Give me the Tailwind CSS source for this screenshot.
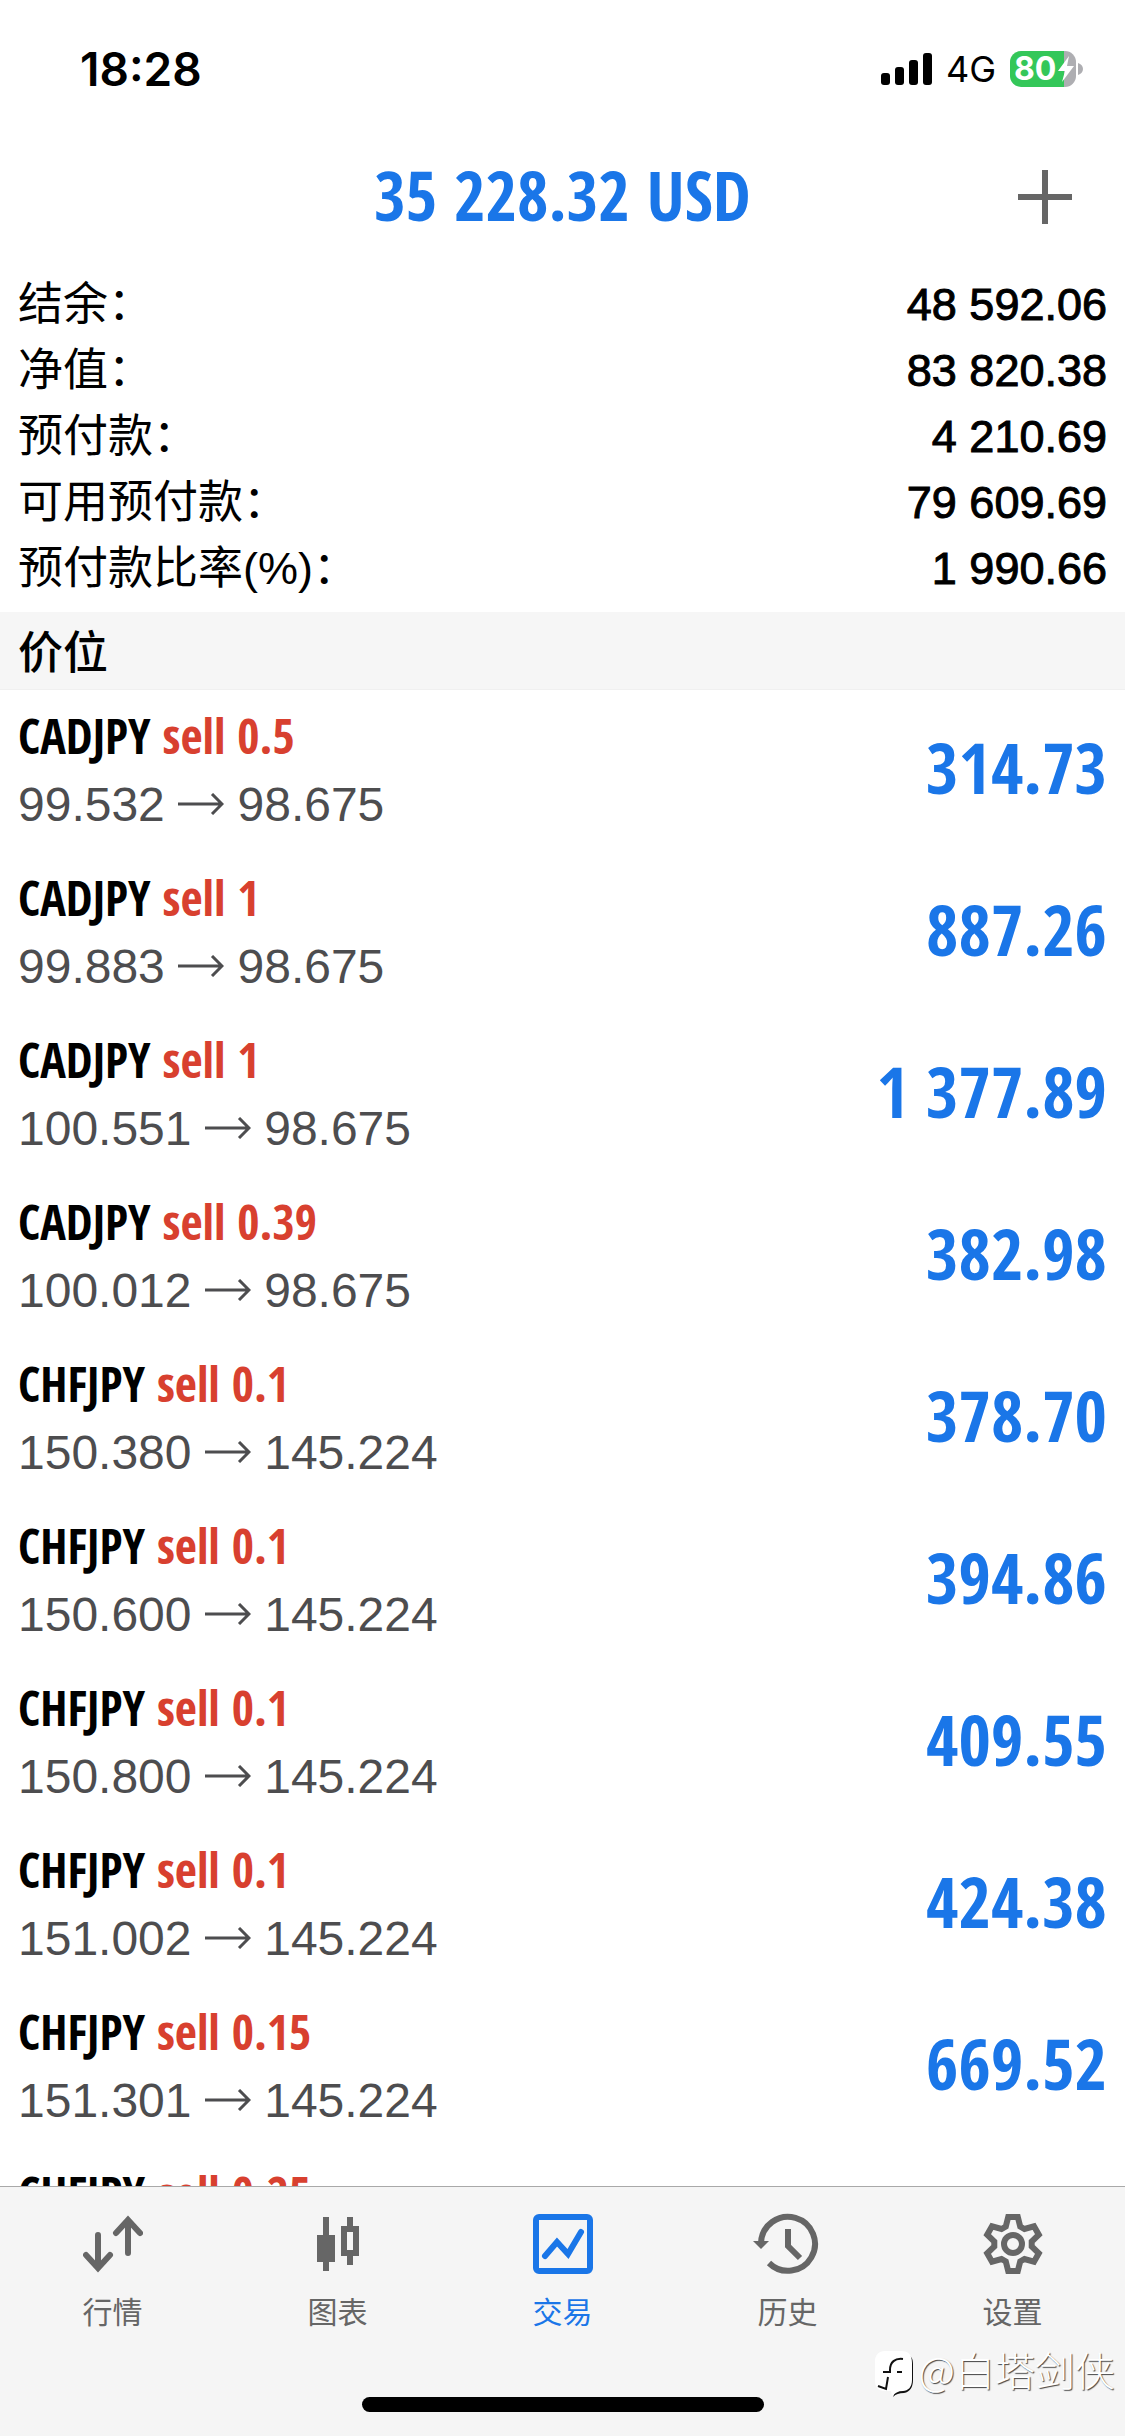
<!DOCTYPE html>
<html lang="zh-CN">
<head>
<meta charset="utf-8">
<meta name="viewport" content="width=device-width, initial-scale=1">
<title>交易</title>
<script src="https://cdn.jsdelivr.net/npm/@tailwindcss/browser@4"></script>
</head>
<body class="bg-white text-black font-['Liberation_Sans','Noto_Sans_CJK_SC',sans-serif]">
<div class="flex h-screen flex-col overflow-hidden">

  <header class="shrink-0">
    <div class="flex h-[138px] items-center justify-between pl-20 pr-[42px] font-[Inter,sans-serif]">
      <time class="text-[46px] leading-none font-semibold">18:28</time>
      <div class="flex items-center">
        <svg class="mr-[14px] h-8 w-[51px]" viewBox="0 0 51 32" aria-hidden="true">
          <rect x="0" y="20" width="9" height="12" rx="3"/><rect x="14" y="14" width="9" height="18" rx="3"/><rect x="28" y="7" width="9" height="25" rx="3"/><rect x="42" y="0" width="9" height="32" rx="3"/>
        </svg>
        <span class="mr-[14px] text-[36px] leading-none">4G</span>
        <div class="flex h-9 w-[66px] items-center rounded-[11px] bg-[linear-gradient(to_right,#34c759_82%,#aeaeb2_82%)] pl-1">
          <span class="text-[32px] leading-9 font-bold text-white">80</span>
          <svg class="ml-[2px] h-[26px] w-4 shrink-0" viewBox="0 0 16 26" fill="#fff" aria-hidden="true"><path d="M11 0 0 15h7L4 26 16 10H9z"/></svg>
        </div>
        <svg class="ml-[2px] h-3 w-[5px]" viewBox="0 0 5 12" fill="#aeaeb2" aria-hidden="true"><path d="M0 0c3 1 5 3 5 6s-2 5-5 6z"/></svg>
      </div>
    </div>
    <div class="grid h-[118px] grid-cols-[1fr_auto_1fr] items-center px-[53px]">
      <h1 class="col-start-2 pb-1 font-['Open_Sans_Condensed',sans-serif] text-[68px] leading-none font-bold text-[#1a76e8]">35 228.32 USD</h1>
      <button type="button" aria-label="新订单" class="justify-self-end">
        <svg class="h-[54px] w-[54px]" viewBox="0 0 54 54" fill="none" stroke="#666" stroke-width="6" aria-hidden="true"><path d="M27 0v54M0 27h54"/></svg>
      </button>
    </div>
  </header>

  <main class="flex min-h-0 flex-1 flex-col overflow-hidden">
    <dl id="summary" class="shrink-0 px-[18px] pt-4 pb-[10px] text-[45px] leading-[66px]"></dl>
    <h2 class="h-[78px] shrink-0 border-b border-[#f0f0f0] bg-[#f6f6f6] px-[18px] text-[45px] leading-[76px] font-medium font-['Noto_Sans_CJK_SC',sans-serif]">价位</h2>
    <ul id="positions" class="shrink-0"></ul>
  </main>

  <nav class="relative h-[250px] shrink-0 border-t border-[#a9a9a9] bg-[#f5f5f5]">
    <div class="grid grid-cols-5 pt-[27px] text-center font-['Noto_Sans_CJK_SC',sans-serif] text-[30px] leading-[44px] text-[#666]">
      <a href="#quotes" class="flex flex-col items-center gap-[14px]">
        <svg class="h-[60px] w-[60px]" viewBox="0 0 60 60" fill="none" stroke="currentColor" stroke-width="6" stroke-linecap="round" aria-hidden="true"><path d="M15 21v32M3 41l12 13 12-13M45 39V7M33 19 45 6l12 13"/></svg>
        行情</a>
      <a href="#charts" class="flex flex-col items-center gap-[14px]">
        <svg class="h-[60px] w-[60px]" viewBox="0 0 60 60" fill="currentColor" aria-hidden="true"><path fill-rule="evenodd" d="M15 3h6v18h6v27h-6v9h-6v-9H9V21h6zM39 3h6v9h6v30h-6v9h-6v-9h-6V12h6zM39 18v18h6V18z"/></svg>
        图表</a>
      <a href="#trade" aria-current="page" class="flex flex-col items-center gap-[14px] text-[#1a76e8]">
        <svg class="h-[60px] w-[60px]" viewBox="0 0 60 60" fill="none" stroke="currentColor" stroke-width="6" aria-hidden="true"><rect x="3" y="3" width="54" height="54" rx="3"/><path stroke-linecap="round" d="M12 42l12-14 11 12 13-22"/></svg>
        交易</a>
      <a href="#history" class="flex flex-col items-center gap-[14px]">
        <svg class="h-[60px] w-[60px] overflow-visible" viewBox="0 0 60 60" fill="none" stroke="currentColor" stroke-width="6" aria-hidden="true"><path d="M3 29A27 27 0 1 1 11 49M30 15v17l12 12"/><path fill="currentColor" stroke="none" d="M-5 27h16l-8 8z"/></svg>
        历史</a>
      <a href="#settings" class="flex flex-col items-center gap-[14px]">
        <svg class="h-[60px] w-[60px]" viewBox="-30 -30 60 60" fill="none" stroke="currentColor" stroke-width="6" aria-hidden="true"><circle r="9"/><path d="M-4.800-27 4.800-27 7.200-17.500 11.500-15 21-17.700 25.800-9.300 18.700-2.500 18.700 2.500 25.800 9.300 21 17.700 11.500 15 7.200 17.500 4.800 27-4.800 27-7.200 17.500-11.500 15-21 17.700-25.800 9.300-18.700 2.500-18.700-2.500-25.800-9.300-21-17.700-11.500-15-7.200-17.500z"/></svg>
        设置</a>
    </div>
    <div class="absolute right-[10px] bottom-[37px] flex items-start gap-1 text-white">
      <svg class="h-12 w-10" viewBox="0 0 40 48" aria-hidden="true"><path fill="#111" d="M30 3c6 1 8 4 8 10v16c0 7-3 12-9 13-5 0-8 1-11 4l3-7z"/><path fill="#fff" d="M10 0h16c8 0 11 4 11 12v17c0 7-4 11-9 11-5 0-8 2-11 5l-1-5h-6C3 40 0 36 0 30V10C0 4 4 0 10 0z"/><path fill="none" stroke="#111" stroke-width="2" d="M28 8c-8-1-13 3-13 11v2H8M22 21h5M13 26l-2 12-8-3"/></svg>
      <span class="font-['Noto_Sans_CJK_SC',sans-serif] text-[40px] leading-9 font-light [text-shadow:1px_1px_1px_#444]">@白塔剑侠</span>
    </div>
    <div class="absolute bottom-6 left-1/2 h-[15px] w-[402px] -translate-x-1/2 rounded-full bg-black"></div>
  </nav>
</div>

<script>
const summary = [
  ['结余：', '48 592.06'], ['净值：', '83 820.38'], ['预付款：', '4 210.69'],
  ['可用预付款：', '79 609.69'], ['预付款比率(%)：', '1 990.66'],
];
const positions = [
  ['CADJPY', '0.5', '99.532', '98.675', '314.73'],
  ['CADJPY', '1', '99.883', '98.675', '887.26'],
  ['CADJPY', '1', '100.551', '98.675', '1 377.89'],
  ['CADJPY', '0.39', '100.012', '98.675', '382.98'],
  ['CHFJPY', '0.1', '150.380', '145.224', '378.70'],
  ['CHFJPY', '0.1', '150.600', '145.224', '394.86'],
  ['CHFJPY', '0.1', '150.800', '145.224', '409.55'],
  ['CHFJPY', '0.1', '151.002', '145.224', '424.38'],
  ['CHFJPY', '0.15', '151.301', '145.224', '669.52'],
];
document.getElementById('summary').innerHTML = summary.map(([label, value]) => `
  <div class="flex h-[66px] justify-between">
    <dt>${label}</dt>
    <dd class="[-webkit-text-stroke:1px_black]">${value}</dd>
  </div>`).join('');
const title = (symbol, lots) => `<p class="font-['Open_Sans_Condensed',sans-serif] text-[48px] leading-[68px] font-bold">${symbol} <span class="text-[#d8402f]">sell ${lots}</span></p>`;
document.getElementById('positions').innerHTML = positions.map(([symbol, lots, open, now, profit]) => `
  <li class="flex h-[162px] items-center justify-between px-[18px]">
    <div>
      ${title(symbol, lots)}
      <p class="text-[48px] leading-[70px] text-[#4d4d4f]">${open} <svg class="inline h-[22px] w-[46px] align-[6px]" viewBox="0 0 46 22" fill="none" stroke="currentColor" stroke-width="3" aria-label="→"><path d="M0 11h44M34 1l10 10-10 10"/></svg> ${now}</p>
    </div>
    <p class="pb-2 font-['Open_Sans_Condensed',sans-serif] text-[70px] leading-none font-bold text-[#1a76e8]">${profit}</p>
  </li>`).join('') + `<li class="h-[162px] px-[18px] pt-3">${title('CHFJPY', '0.25')}</li>`;
</script>
</body>
</html>
